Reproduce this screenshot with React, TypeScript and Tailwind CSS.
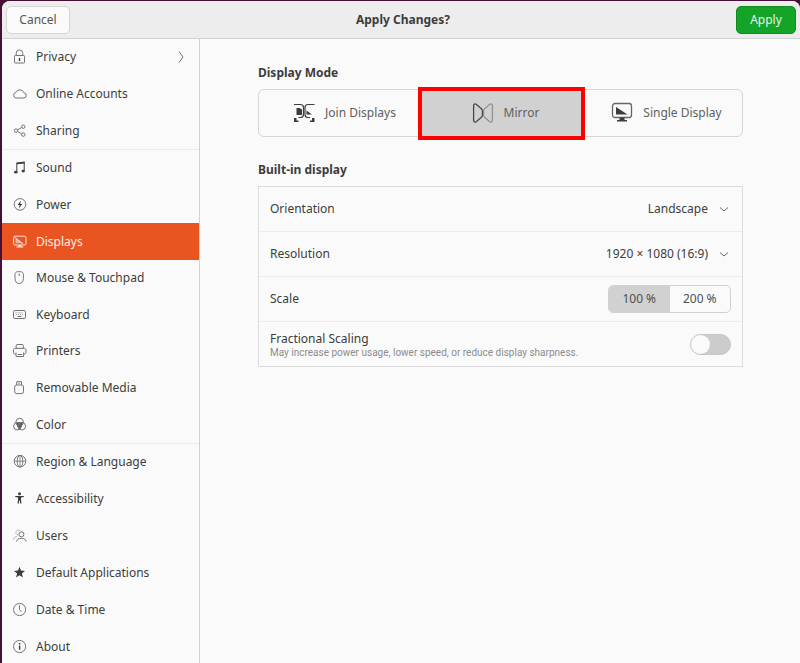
import { useState } from "react";
import type { ReactNode } from "react";
import clsx from "clsx";

type NavItem = { label: string; icon: ReactNode; more?: boolean };

function Glyph({ children }: { children: ReactNode }) {
  return (
    <svg
      width="16"
      height="16"
      viewBox="0 0 16 16"
      fill="none"
      stroke="currentColor"
      strokeWidth="1"
      className="shrink-0"
      aria-hidden="true"
    >
      {children}
    </svg>
  );
}

const groups: { height: string; items: NavItem[] }[] = [
  {
    height: "h-[111px] border-b",
    items: [
      {
        label: "Privacy",
        more: true,
        icon: (
          <Glyph>
            <rect x="2.5" y="6.5" width="10" height="7.5" rx="0.8" />
            <path d="M4.2 6.5V4.3a3.3 3.3 0 0 1 6.6 0v2.2" />
            <path d="M7.5 9v3" strokeWidth="1.4" className="stroke-[#3d3d3d]" />
          </Glyph>
        ),
      },
      {
        label: "Online Accounts",
        icon: (
          <Glyph>
            <path d="M3.9 12h7.6a2.6 2.6 0 0 0 .4-5.2A4.2 4.2 0 0 0 4 6.4 2.85 2.85 0 0 0 3.9 12z" />
          </Glyph>
        ),
      },
      {
        label: "Sharing",
        icon: (
          <Glyph>
            <circle cx="4" cy="7.6" r="1.7" />
            <circle cx="11.3" cy="3.7" r="1.7" />
            <circle cx="11.3" cy="11.6" r="1.7" />
            <path d="M5.5 6.8l4.3-2.3M5.5 8.5l4.3 2.3" />
          </Glyph>
        ),
      },
    ],
  },
  {
    height: "h-[294px] border-b",
    items: [
      {
        label: "Sound",
        icon: (
          <Glyph>
            <g className="fill-[#3d3d3d]" stroke="none">
              <path d="M4.3 2.4l8.4-1v2l-7.4.9v7.6h-1z" />
              <path d="M11.7 2h1v9h-1z" />
              <ellipse cx="3.8" cy="12.2" rx="1.7" ry="1.4" />
              <ellipse cx="11.2" cy="11.1" rx="1.7" ry="1.4" />
            </g>
          </Glyph>
        ),
      },
      {
        label: "Power",
        icon: (
          <Glyph>
            <circle cx="8" cy="7.4" r="5.8" />
            <path d="M8.8 3.8L5.6 8h2l-.6 3.2L10.3 7h-2z" className="fill-[#3d3d3d]" stroke="none" />
          </Glyph>
        ),
      },
      {
        label: "Displays",
        icon: (
          <Glyph>
            <rect x="1.6" y="2.2" width="12.4" height="8.8" rx="1.4" />
            <path d="M3.5 4v5.2h7.8z" fill="currentColor" stroke="none" opacity="0.65" />
            <path d="M2.5 3l8.5 7" />
            <path d="M6.2 11h3.4v1.5h1.7v1H4.5v-1h1.7z" fill="currentColor" stroke="none" />
          </Glyph>
        ),
      },
      {
        label: "Mouse & Touchpad",
        icon: (
          <Glyph>
            <path d="M3 4.5c0-1.500 1-2.800 2.800-2.800h2.800c1.800 0 2.800 1.300 2.800 2.800v4c0 3.200-1.700 5-4.200 5S3 11.700 3 8.500z" />
            <path d="M7.200 3.500V6" />
          </Glyph>
        ),
      },
      {
        label: "Keyboard",
        icon: (
          <Glyph>
            <rect x="1.5" y="3.5" width="12" height="8" rx="1.4" />
            <path d="M3.5 5.7h8M4 7.6h7" strokeDasharray="1 1" opacity="0.7" />
            <path d="M5.5 9.5h4" />
          </Glyph>
        ),
      },
      {
        label: "Printers",
        icon: (
          <Glyph>
            <path d="M4.2 5V2.4c0-.6.3-.9.9-.9h5.3c.6 0 .9.3.9.9V5" />
            <path d="M3.5 11H2.9c-.9 0-1.4-.6-1.4-1.5V7c0-1 .6-1.6 1.6-1.6h9.3c1 0 1.6.6 1.6 1.6v2.5c0 .9-.5 1.5-1.4 1.5H12" />
            <path d="M4 9.5v4h7.6v-4M5.5 11.5h4.6" />
          </Glyph>
        ),
      },
      {
        label: "Removable Media",
        icon: (
          <Glyph>
            <rect x="2.7" y="5" width="8.800" height="8.600" rx="2" />
            <path d="M4.700 5V1.700h4.800V5M6.400 3.200h1.400" />
          </Glyph>
        ),
      },
      {
        label: "Color",
        icon: (
          <Glyph>
            <path d="M4.4 5.2h6.4L10 9.2 7.6 12 5.2 9.2z" className="fill-[#555]" stroke="none" />
            <circle cx="7.6" cy="5.1" r="3.8" />
            <circle cx="5.4" cy="9.2" r="3.8" />
            <circle cx="9.8" cy="9.2" r="3.8" />
          </Glyph>
        ),
      },
    ],
  },
  {
    height: "h-[221px]",
    items: [
      {
        label: "Region & Language",
        icon: (
          <Glyph>
            <circle cx="8" cy="7.2" r="5.8" />
            <ellipse cx="8" cy="7.2" rx="2.8" ry="5.8" />
            <path d="M8 1.4V13M2.2 7.2h11.6" opacity="0.8" />
          </Glyph>
        ),
      },
      {
        label: "Accessibility",
        icon: (
          <Glyph>
            <g className="fill-[#3d3d3d]" stroke="none">
              <circle cx="7.5" cy="2.8" r="1.500" />
              <path d="M3.2 5h8.6v1l-2.800.6v2.200l.5 3.800H8.200l-.4-3h-.6l-.4 3H5.500l.5-3.800V6.600L3.200 6z" />
            </g>
          </Glyph>
        ),
      },
      {
        label: "Users",
        icon: (
          <Glyph>
            <circle cx="9.4" cy="6.3" r="2.5" />
            <path d="M4.5 13.6c.4-2.2 2-3.3 4.9-3.3s4.3 1.1 4.7 3.3" />
            <path d="M6 7a2.5 2.5 0 1 1 2.4-4M1.5 11.7c.2-1.9 1.4-3 3.6-3.2" opacity="0.5" />
          </Glyph>
        ),
      },
      {
        label: "Default Applications",
        icon: (
          <Glyph>
            <path
              d="M7.5 1.8l1.5 3.8 4 .3-3.1 2.6 1 4-3.4-2.2-3.4 2.2 1-4L2 5.900l4-.3z"
              className="fill-[#3d3d3d]"
              stroke="none"
            />
          </Glyph>
        ),
      },
      {
        label: "Date & Time",
        icon: (
          <Glyph>
            <circle cx="7.6" cy="7.5" r="6.1" />
            <path d="M7.5 3.5v4l1.8 2.3" />
          </Glyph>
        ),
      },
      {
        label: "About",
        icon: (
          <Glyph>
            <circle cx="7.6" cy="7.5" r="6.1" />
            <path d="M7.6 4v1.5M7.6 6.6v4.2" strokeWidth="1.4" className="stroke-[#3d3d3d]" />
          </Glyph>
        ),
      },
    ],
  },
];

function JoinIcon() {
  return (
    <svg width="22" height="22" viewBox="0 0 22 22" fill="none" stroke="#3d3d3d" aria-hidden="true">
      <path d="M1 2.5h6.500c2 0 3 1.300 3 3v7c0 1.700-1 3-3 3H5.500" strokeWidth="1.200" />
      <path d="M21.500 2.500H15c-2 0-3 1.300-3 3v7c0 1.700 1 3 3 3h2" strokeWidth="1.200" />
      <g fill="#3d3d3d" stroke="none">
        <path d="M3.500 6h3l2.500 1.500V13H3.500zM13.500 8.500l5.500 4h-5.500z" />
        <path d="M1 16h2.500v2.500H5.500V20H1zM21.500 16H19v2.500h-2V20h4.500z" />
      </g>
    </svg>
  );
}

function MirrorIcon() {
  return (
    <svg width="22" height="22" viewBox="0 0 22 22" fill="none" strokeWidth="1.3" aria-hidden="true">
      <path
        d="M20.4 3.5v15c0 1.5-1.5 2-2.6 1.2l-5.2-4.5c-.7-.6-1-1-1-2V8.8c0-1 .3-1.4 1-2l5.2-4.5c1.1-.8 2.6-.3 2.6 1.2z"
        stroke="#929292"
      />
      <path
        d="M1.6 3.5v15c0 1.5 1.5 2 2.6 1.2l5.2-4.5c.7-.6 1-1 1-2V8.8c0-1-.3-1.4-1-2L4.2 2.3C3.1 1.5 1.6 2 1.6 3.5z"
        stroke="#484848"
      />
    </svg>
  );
}

function SingleIcon() {
  return (
    <svg width="22" height="22" viewBox="0 0 22 22" fill="none" aria-hidden="true">
      <rect x="1.5" y="1.500" width="19" height="14" rx="2.5" stroke="#666" strokeWidth="1.3" />
      <path d="M5 5l11.500 7.500H5zM8.500 15.500h5V18H16v1.500H6V18h2.500z" fill="#3d3d3d" />
    </svg>
  );
}

function Chevron() {
  return (
    <svg width="10" height="10" viewBox="0 0 10 10" fill="none" stroke="#666" aria-hidden="true">
      <path d="M1 3.5L5 7l4-3.5" />
    </svg>
  );
}

function Sidebar() {
  return (
    <nav className="w-[198px] shrink-0 border-r border-[#d2d2d2]">
      {groups.map((group) => (
        <ul key={group.items[0].label} className={clsx("grid auto-rows-fr border-[#ececec]", group.height)}>
          {group.items.map(({ label, icon, more }) => {
            const active = label === "Displays";
            return (
              <li key={label} className="grid">
                <a
                  href="#"
                  aria-current={active ? "page" : undefined}
                  className={clsx(
                    "flex items-center gap-2 pr-[14px] pl-[10px]",
                    active ? "bg-[#e95420] text-[#fbe3da]" : "text-[#747474]",
                  )}
                >
                  {icon}
                  <span className={active ? "text-[#fdeee8]" : "text-[#3d3d3d]"}>{label}</span>
                  {more && (
                    <svg width="8" height="14" viewBox="0 0 8 14" fill="none" stroke="#777" className="ml-auto" aria-hidden="true">
                      <path d="M2 1.5L6 7l-4 5.5" />
                    </svg>
                  )}
                </a>
              </li>
            );
          })}
        </ul>
      ))}
    </nav>
  );
}

const modes = [
  { label: "Join Displays", icon: <JoinIcon /> },
  { label: "Mirror", icon: <MirrorIcon /> },
  { label: "Single Display", icon: <SingleIcon /> },
];

function ModeSwitcher() {
  const [mode, setMode] = useState("Mirror");
  return (
    <div className="mt-2 grid h-[48px] grid-cols-3 rounded-md border border-[#d6d6d6]">
      {modes.map(({ label, icon }) => (
        <button
          key={label}
          type="button"
          aria-pressed={mode === label}
          onClick={() => setMode(label)}
          className={clsx(
            "relative flex items-center justify-center gap-[10px] pl-[10px] text-[#606060]",
            mode === label && "bg-[#d1d1d1]",
          )}
        >
          {icon}
          {label}
          {mode === label && (
            <span className="absolute -top-[3px] -right-1 -bottom-1 -left-[2px] border-4 border-[#ff0000]" />
          )}
        </button>
      ))}
    </div>
  );
}

function SelectRow({ id, label, value }: { id: string; label: string; value: string }) {
  return (
    <div className="flex h-[45px] items-center justify-between border-b border-[#ececec] pr-[13px] pl-[11px]">
      <label htmlFor={id}>{label}</label>
      <div className="flex items-center gap-[11px]">
        <select id={id} className="appearance-none bg-transparent text-right">
          <option>{value}</option>
        </select>
        <Chevron />
      </div>
    </div>
  );
}

function ScaleRow() {
  const [scale, setScale] = useState(100);
  return (
    <div className="flex h-[45px] items-center justify-between border-b border-[#ececec] pr-[11px] pl-[11px]">
      <span id="scale-label">Scale</span>
      <div
        role="group"
        aria-labelledby="scale-label"
        className="grid h-7 w-[123px] grid-cols-2 overflow-hidden rounded-[5px] border border-[#d1d1d1]"
      >
        {[100, 200].map((n) => (
          <button
            key={n}
            type="button"
            aria-pressed={scale === n}
            onClick={() => setScale(n)}
            className={clsx("text-[#505050]", scale === n && "bg-[#d1d1d1]")}
          >
            {n} %
          </button>
        ))}
      </div>
    </div>
  );
}

export default function App() {
  return (
    <div className="min-h-screen bg-[#451033] pt-px pl-[2px] font-['Noto_Sans',sans-serif] text-[12px] leading-4 text-[#3d3d3d]">
      <div className="min-h-[662px] overflow-hidden rounded-t-lg bg-[#fafafa]">
        <header className="flex h-[38px] items-center justify-between border-b border-[#d2d2d2] bg-[#ededed] pr-1 pl-1">
          <button type="button" className="h-7 w-16 rounded-[5px] border border-[#d6d6d6] bg-[#fafafa] text-[#555]">
            Cancel
          </button>
          <h1 className="font-bold">Apply Changes?</h1>
          <button type="button" className="h-7 w-[60px] rounded-[5px] border border-[#138a20] bg-[#14a428] text-[#e6f5e8]">
            Apply
          </button>
        </header>

        <div className="flex">
          <Sidebar />
          <main className="flex-1 pt-[26px] pr-[57px] pl-[58px]">
            <h2 className="font-bold">Display Mode</h2>
            <ModeSwitcher />

            <h2 className="mt-[25px] font-bold">Built-in display</h2>
            <section className="mt-2 border border-[#dcdcdc]">
              <SelectRow id="orientation" label="Orientation" value="Landscape" />
              <SelectRow id="resolution" label="Resolution" value="1920 × 1080 (16:9)" />
              <ScaleRow />
              <div className="flex h-11 items-center justify-between pr-[11px] pl-[11px]">
                <label htmlFor="fractional">
                  <span className="block">Fractional Scaling</span>
                  <span className="block font-['Roboto',sans-serif] text-[10px] leading-[11px] text-[#8c8c8c]">
                    May increase power usage, lower speed, or reduce display sharpness.
                  </span>
                </label>
                <input
                  id="fractional"
                  type="checkbox"
                  role="switch"
                  className="flex h-[21px] w-[41px] appearance-none items-center rounded-full border border-[#c6c6c6] bg-[#cccccc] before:size-[19px] before:rounded-full before:bg-[#fafafa] checked:justify-end checked:bg-[#e95420]"
                />
              </div>
            </section>
          </main>
        </div>
      </div>
    </div>
  );
}
